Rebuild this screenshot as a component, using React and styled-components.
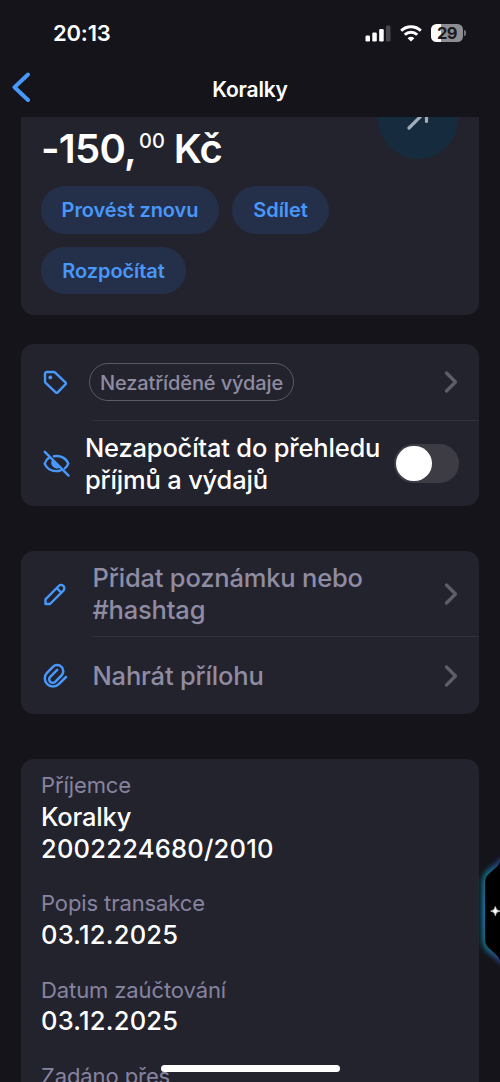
import styled, { createGlobalStyle } from 'styled-components'

const GlobalStyle = createGlobalStyle`
  * {
    box-sizing: border-box;
  }
  body {
    margin: 0;
    background: #15141a;
    font-family: Inter, 'Liberation Sans', sans-serif;
    color: #fff;
  }
`

const Screen = styled.div`
  position: relative;
  display: flex;
  flex-direction: column;
  width: 500px;
  height: 1082px;
  overflow: hidden;
  background: #15141a;
`

const StatusBar = styled.div`
  display: flex;
  align-items: center;
  justify-content: space-between;
  flex: none;
  height: 66px;
  padding: 0 34px 0 53px;
`

const Time = styled.span`
  font-size: 22px;
  font-weight: 600;
  letter-spacing: -0.2px;
`

const StatusIcons = styled.div`
  display: flex;
  align-items: center;
  gap: 9px;
`

const Battery = styled.div`
  display: flex;
  align-items: center;
  gap: 1px;

  &::after {
    content: '';
    width: 2px;
    height: 6px;
    border-radius: 0 3px 3px 0;
    background: #77767a;
  }
`

const BatteryLevel = styled.span`
  width: 32px;
  height: 18px;
  border-radius: 5.5px;
  background: linear-gradient(90deg, #fff ${props => props.$level}%, #8e8d91 ${props => props.$level}%);
  color: #1b1a20;
  font-size: 16.5px;
  font-weight: 700;
  line-height: 18px;
  text-align: center;
  letter-spacing: -0.5px;
`

const Header = styled.header`
  display: grid;
  grid-template-columns: 60px 1fr 60px;
  align-items: center;
  flex: none;
  height: 51px;
  padding-bottom: 7px;
`

const BackButton = styled.button`
  display: flex;
  padding: 0 0 0 11px;
  border: 0;
  background: none;
  color: #4897fb;
`

const Title = styled.h1`
  margin: 0;
  padding-top: 3px;
  font-size: 21px;
  font-weight: 600;
  line-height: 28px;
  letter-spacing: -0.2px;
  text-align: center;
`

const Scroll = styled.main`
  flex: 1;
  min-height: 0;
  overflow: hidden;
`

/* already scrolled a little, the first card is cut by the header */
const Content = styled.div`
  display: flex;
  flex-direction: column;
  margin-top: -58px;
  padding: 0 21px;
`

const Card = styled.section`
  flex: none;
  height: ${props => props.$height}px;
  margin-bottom: ${props => props.$gap || 45}px;
  padding: ${props => props.$padding || '0'};
  border-radius: 13px;
  background: #23232d;
  overflow: hidden;
`

const AmountRow = styled.div`
  display: flex;
  align-items: flex-end;
  justify-content: space-between;
  height: 100px;
  margin-bottom: 7px;
`

const Amount = styled.div`
  display: flex;
  padding-bottom: 5px;
  font-size: 40px;
  font-weight: 600;
  line-height: 50px;
  letter-spacing: -0.75px;
`

const Cents = styled.span`
  margin: 0 9px 0 3px;
  font-size: 20px;
  font-weight: 500;
  line-height: 34px;
  letter-spacing: 0;
`

const Direction = styled.div`
  display: flex;
  align-items: center;
  justify-content: center;
  align-self: flex-start;
  width: 80px;
  height: 80px;
  margin-right: 1px;
  border-radius: 50%;
  background: #162c3e;
  color: #a3adb8;
`

const Actions = styled.div`
  display: flex;
  flex-wrap: wrap;
  gap: 13px;
`

const Pill = styled.button`
  width: ${props => props.$width}px;
  height: 47.5px;
  padding: 1px 0 0;
  border: 0;
  border-radius: 24px;
  background: #24304a;
  color: #4897fb;
  font-family: inherit;
  font-size: 20px;
  font-weight: 600;
  letter-spacing: -0.08px;
`

const Row = styled.div`
  display: flex;
  align-items: center;
  height: ${props => props.$height}px;
  padding: 0 20px 0 22px;
`

const Divider = styled.div`
  height: 1px;
  margin-left: 70px;
  background: #31313b;
`

const RowIcon = styled.span`
  display: flex;
  flex: none;
  width: ${props => props.$width || 49.5}px;
  color: #4897fb;
`

const RowText = styled.span`
  flex: 1;
  color: ${props => (props.$muted ? '#8f8ca3' : '#fff')};
  font-size: 25.5px;
  font-weight: 500;
  line-height: 32px;
  letter-spacing: -0.19px;
  white-space: nowrap;
`

const Tag = styled.span`
  width: 205px;
  height: 38.5px;
  margin: 0 auto 0 -3.5px;
  border: 1px solid #5b5a68;
  border-radius: 19px;
  color: #8f8ca3;
  font-size: 20px;
  font-weight: 500;
  line-height: 38px;
  text-align: center;
  letter-spacing: -0.12px;
`

const Switch = styled.span`
  flex: none;
  width: 65px;
  height: 39.5px;
  padding: 2px;
  border-radius: 20px;
  background: #3d3c45;

  &::before {
    content: '';
    display: block;
    width: 35.5px;
    height: 35.5px;
    border-radius: 50%;
    background: #fff;
  }
`

const Chevron = styled.svg`
  flex: none;
  color: #5f5e68;
`

const Detail = styled.dl`
  margin: 0 0 23.8px;
`

const Label = styled.dt`
  color: #8783a0;
  font-size: 22px;
  line-height: 30.5px;
  letter-spacing: -0.1px;
`

const Value = styled.dd`
  margin: 0;
  font-size: 25.5px;
  font-weight: 500;
  line-height: 32px;
  letter-spacing: ${props => (props.$numeric ? 0.22 : -0.2)}px;
`

const Assistant = styled.svg`
  position: absolute;
  top: 840px;
  right: 0;
`

const HomeIndicator = styled.div`
  position: absolute;
  left: 161px;
  bottom: 10px;
  width: 178.5px;
  height: 7px;
  border-radius: 4px;
  background: #fff;
`

const SignalIcon = () => (
  <svg width="26" height="17" viewBox="0 0 26 17" fill="#fff">
    <rect x="0.5" y="10.5" width="4.5" height="6" rx="1.2" />
    <rect x="7.3" y="7.5" width="4.5" height="9" rx="1.2" />
    <rect x="14.2" y="4" width="4.5" height="12.5" rx="1.2" />
    <rect x="21" y="0.5" width="4.5" height="16" rx="1.2" fill="#47464c" />
  </svg>
)

const WifiIcon = () => (
  <svg width="22" height="17" viewBox="0 0 22 17" fill="none" stroke="#fff" strokeWidth="3">
    <path d="M1.2 5.700a14 14 0 0 1 19.600 0" />
    <path d="M4.800 9.800a8.800 8.800 0 0 1 12.400 0" />
    <path d="M7.600 13.200a4.900 4.900 0 0 1 6.800 0L11 16.600z" fill="#fff" stroke="none" />
  </svg>
)

const BackIcon = () => (
  <svg width="20" height="32" viewBox="0 0 20 32" fill="none" stroke="currentColor" strokeWidth="4" strokeLinecap="round" strokeLinejoin="round">
    <path d="M17 2.500L3.500 15.200 17 28" />
  </svg>
)

const ArrowIcon = () => (
  <svg width="26" height="26" viewBox="0 0 26 26" fill="none" stroke="currentColor" strokeWidth="3.200" strokeLinecap="round" strokeLinejoin="round">
    <path d="M4 22L21.500 4.500M7 4.500h14.500v11" />
  </svg>
)

const TagIcon = () => (
  <svg width="26" height="26" viewBox="0 0 26 26" fill="none" stroke="currentColor" strokeWidth="2.400" strokeLinejoin="round">
    <path d="M4 3h6.700c.6 0 1.100.2 1.500.6l10.200 9.800c.7.7.7 1.300 0 2l-7.700 7.900c-.7.7-1.300.7-2 0L2.600 13.800c-.4-.4-.6-.9-.6-1.500V5c0-1.300.7-2 2-2z" />
    <circle cx="7.300" cy="8.400" r="1.900" fill="currentColor" stroke="none" />
  </svg>
)

const HiddenIcon = () => (
  <svg width="28" height="28" viewBox="0 0 28 28" fill="none" stroke="currentColor" strokeWidth="2.400" strokeLinecap="round">
    <path d="M1.800 1.800L25.600 25.600" />
    <path d="M6.200 7.600C3.800 9.200 2.300 11.500 1.700 13.700c1.500 4.400 6 7.400 11.500 7.400 1.600 0 3.100-.3 4.500-.8" />
    <path d="M11 6.300c6.900-1.200 12.500 2.200 14.300 7.400-.7 1.900-1.900 3.500-3.500 4.700" />
    <path d="M9.600 9.600a5.400 5.400 0 0 0 7.600 7.600z" fill="currentColor" stroke="none" />
  </svg>
)

const PencilIcon = () => (
  <svg width="24" height="24" viewBox="0 0 24 24" fill="none" stroke="currentColor" strokeWidth="2.400" strokeLinejoin="round">
    <path d="M2.500 22v-4.700L15.700 4a3.200 3.200 0 0 1 4.700 4.600L7 22z" />
    <path d="M13.600 6l4.700 4.700" />
  </svg>
)

const ClipIcon = () => (
  <svg width="26" height="26" viewBox="0 0 26 26" fill="none" stroke="currentColor" strokeWidth="2.500" strokeLinecap="round">
    <path d="M23 14l-7.200 7.200a8 8 0 0 1-11.600-11.600l5.700-5.700a5.800 5.800 0 0 1 8.600 8.600l-6.300 6.300a3.200 3.200 0 0 1-5-5l7-7" />
  </svg>
)

const ChevronIcon = () => (
  <Chevron width="16" height="24" viewBox="0 0 16 24" fill="none" stroke="currentColor" strokeWidth="3.300" strokeLinecap="round" strokeLinejoin="round">
    <path d="M3.500 3L12.500 12 3.500 21" />
  </Chevron>
)

const AssistantTab = () => (
  <Assistant width="60" height="140" viewBox="0 0 60 140">
    <defs>
      <linearGradient id="glow" x1="0" y1="0" x2="0" y2="1">
        <stop offset="0" stopColor="#30409c" />
        <stop offset="0.15" stopColor="#0b6f80" />
        <stop offset="0.5" stopColor="#0880b8" />
        <stop offset="0.85" stopColor="#0b6f80" />
        <stop offset="1" stopColor="#3a3c9c" />
      </linearGradient>
      <filter id="soft" x="-60%" y="-30%" width="220%" height="160%">
        <feGaussianBlur stdDeviation="2.8" />
      </filter>
    </defs>
    <path d="M64 19c-3 6-8 8-13 12-4 3-6 7-6 12v56c0 5 2 9 6 12 5 4 10 6 13 12z" fill="url(#glow)" stroke="url(#glow)" strokeWidth="6" filter="url(#soft)" />
    <path d="M60 21c-1 5-5 7-9 11-4 3-6 6-6 11v56c0 5 2 8 6 11 4 4 8 6 9 11z" fill="#000" />
    <path d="M55.300 66.500q.4 4.200 4.700 4.600-4.300.4-4.700 4.600-.4-4.200-4.600-4.600 4.200-.4 4.600-4.600z" fill="#fff" stroke="#fff" strokeWidth=".6" />
  </Assistant>
)

function App() {
  return (
    <Screen>
      <GlobalStyle />
      <StatusBar>
        <Time>20:13</Time>
        <StatusIcons>
          <SignalIcon />
          <WifiIcon />
          <Battery>
            <BatteryLevel $level={30}>29</BatteryLevel>
          </Battery>
        </StatusIcons>
      </StatusBar>
      <Header>
        <BackButton><BackIcon /></BackButton>
        <Title>Koralky</Title>
      </Header>
      <Scroll>
        <Content>
          <Card $height={256} $gap={28.5} $padding="20px">
            <AmountRow>
              <Amount>
                -150,<Cents>00</Cents>Kč
              </Amount>
              <Direction><ArrowIcon /></Direction>
            </AmountRow>
            <Actions>
              <Pill $width={178}>Provést znovu</Pill>
              <Pill $width={97}>Sdílet</Pill>
              <Pill $width={145}>Rozpočítat</Pill>
            </Actions>
          </Card>
          <Card $height={162.5}>
            <Row $height={76.5}>
              <RowIcon><TagIcon /></RowIcon>
              <Tag>Nezatříděné výdaje</Tag>
              <ChevronIcon />
            </Row>
            <Divider />
            <Row $height={85}>
              <RowIcon $width={42}><HiddenIcon /></RowIcon>
              <RowText>Nezapočítat do přehledu<br />příjmů a výdajů</RowText>
              <Switch />
            </Row>
          </Card>
          <Card $height={162.5}>
            <Row $height={85}>
              <RowIcon><PencilIcon /></RowIcon>
              <RowText $muted>Přidat poznámku nebo<br />#hashtag</RowText>
              <ChevronIcon />
            </Row>
            <Divider />
            <Row $height={77}>
              <RowIcon><ClipIcon /></RowIcon>
              <RowText $muted>Nahrát přílohu</RowText>
              <ChevronIcon />
            </Row>
          </Card>
          <Card $height={400} $padding="11.7px 20px">
            <Detail>
              <Label>Příjemce</Label>
              <Value>Koralky</Value>
              <Value $numeric>2002224680/2010</Value>
            </Detail>
            <Detail>
              <Label>Popis transakce</Label>
              <Value $numeric>03.12.2025</Value>
            </Detail>
            <Detail>
              <Label>Datum zaúčtování</Label>
              <Value $numeric>03.12.2025</Value>
            </Detail>
            <Detail>
              <Label>Zadáno přes</Label>
            </Detail>
          </Card>
        </Content>
      </Scroll>
      <AssistantTab />
      <HomeIndicator />
    </Screen>
  )
}

export default App
